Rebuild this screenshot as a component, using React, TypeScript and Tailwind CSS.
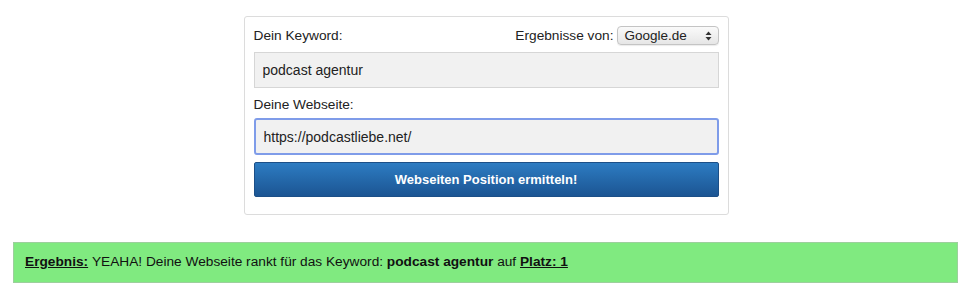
import React, { useState } from 'react';

const App: React.FC = () => {
  const [keyword, setKeyword] = useState('podcast agentur');
  const [site, setSite] = useState('https://podcastliebe.net/');

  return (
    <div className="w-[974px] h-[299px] bg-white text-[13.7px] text-[#222] font-['Liberation_Sans',Arial,sans-serif]">
      <div className="pt-[16px] flex justify-center">
        <div className="w-[485px] ml-[-2px] border border-[#dcdcdc] rounded-[3px] px-[9px] pt-[8px] pb-[17px]">
          <div className="flex items-center justify-between h-[22px]">
            <label className="ml-[0px]">Dein Keyword:</label>
            <div className="flex items-center gap-[3px]">
              <span>Ergebnisse von:</span>
              <div className="relative w-[102px] h-[19px] rounded-[4px] border border-[#c4c4c4] bg-gradient-to-b from-[#fafafa] to-[#e6e6e6] shadow-[0_1px_1px_rgba(0,0,0,0.08)] flex items-center pl-[7px] text-[13.5px]">
                Google.de
                <svg className="absolute right-[6px] top-[4px]" width="7" height="10" viewBox="0 0 7 10">
                  <path d="M3.5 0.5 L6.5 4 L0.5 4 Z" fill="#333" />
                  <path d="M3.5 9.5 L6.5 6 L0.5 6 Z" fill="#333" />
                </svg>
              </div>
            </div>
          </div>
          <input
            value={keyword}
            onChange={(e) => setKeyword(e.target.value)}
            className="mt-[5px] block w-full h-[36px] px-[8px] bg-[#f1f1f1] border border-[#d6d6d6] outline-none text-[14px] text-[#222]"
          />
          <label className="block mt-[9px] leading-[16px]">Deine Webseite:</label>
          <input
            value={site}
            onChange={(e) => setSite(e.target.value)}
            className="mt-[5px] block w-full h-[37px] px-[8px] bg-[#f1f1f1] border-[2px] border-[#7f9ce9] rounded-[3px] outline-none text-[14px] text-[#222]"
          />
          <button className="mt-[7px] block w-[465px] h-[35px] rounded-[2px] border border-[#1c4f87] bg-gradient-to-b from-[#2d7cc2] to-[#1c5593] text-white font-bold text-[13px]">
            Webseiten Position ermitteln!
          </button>
        </div>
      </div>
      <div className="mt-[27px] mx-[13px] w-[945px] h-[41px] bg-[#80ea80] border border-[#9dcf9d] flex items-center px-[11px] text-[13.7px] text-[#111]">
        <span className="font-bold underline">Ergebnis:</span>
        <span>&nbsp;YEAHA! Deine Webseite rankt für das Keyword:&nbsp;</span>
        <span className="font-bold">podcast agentur</span>
        <span>&nbsp;auf&nbsp;</span>
        <span className="font-bold underline">Platz: 1</span>
      </div>
    </div>
  );
};

export default App;
